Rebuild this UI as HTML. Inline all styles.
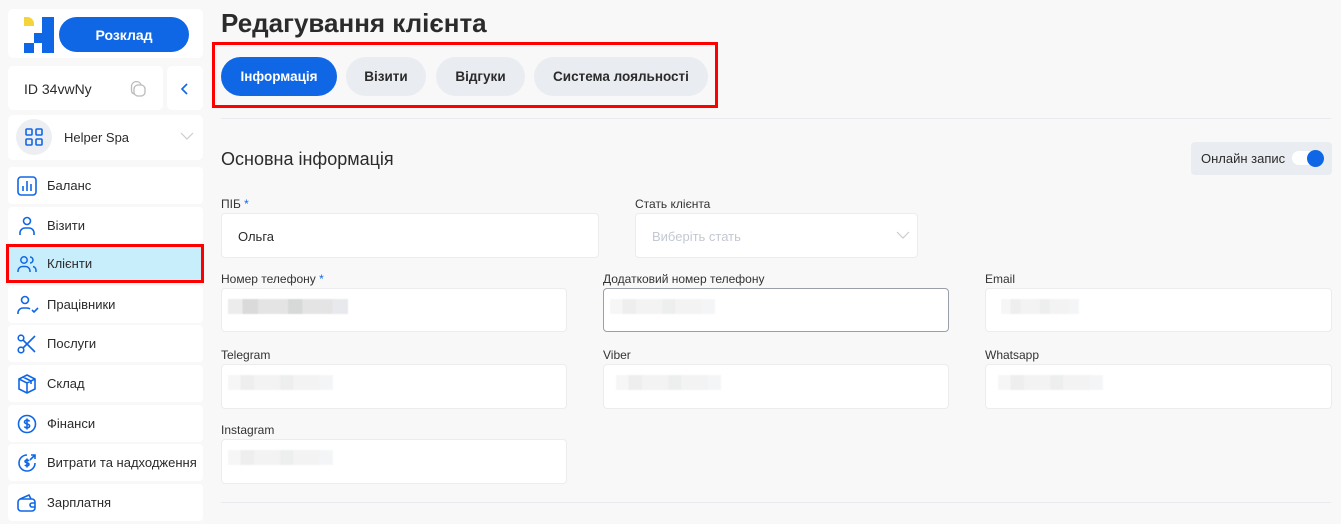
<!DOCTYPE html>
<html><head><meta charset="utf-8"><style>
*{box-sizing:border-box;margin:0;padding:0}
body{width:1341px;height:524px;overflow:hidden;background:#f8f8f9;font-family:"Liberation Sans",sans-serif;color:#2b2b2b;position:relative}
.a{position:absolute}
.card{position:absolute;background:#fff;border-radius:5px}
.mi{position:absolute;left:8px;width:195px;height:37px;background:#fff;border-radius:4px;font-size:13px;display:flex;align-items:center;padding-left:39px}
.mi svg{position:absolute;left:9px;top:9px}
.lbl{position:absolute;font-size:12px;color:#333}
.inp{position:absolute;background:#fff;border:1px solid #ececee;border-radius:4px;font-size:13px}
.blur{position:absolute;height:15px;top:10px;background:linear-gradient(90deg,#ebebeb 0 12%,#d6d6d6 12% 25%,#e2e2e2 25% 50%,#d3d5d5 50% 62%,#e2e2e2 62% 87%,#e6e7ea 87%);filter:blur(0.6px);opacity:.9}
.tab{position:absolute;top:57px;height:39px;border-radius:20px;background:#e9ecf1;font-size:13.5px;font-weight:bold;display:flex;align-items:center;justify-content:center;color:#2b2b2b}
</style></head><body>
<!-- sidebar -->
<div class="card" style="left:8px;top:9px;width:195px;height:49px"></div>
<div class="a" style="left:24px;top:17px;width:30px;height:36px">
<div class="a" style="left:0;top:0;width:10px;height:9px;background:#f5d33b;border-radius:0 7px 0 0"></div>
<div class="a" style="left:18px;top:0;width:12px;height:36px;background:#1067e6"></div>
<div class="a" style="left:10px;top:16px;width:8px;height:10px;background:#1067e6"></div>
<div class="a" style="left:0;top:26px;width:10px;height:10px;background:#1067e6"></div>
</div>
<div class="a" style="left:59px;top:17px;width:130px;height:35px;border-radius:18px;background:#1067e6;color:#fff;font-weight:bold;font-size:14px;display:flex;align-items:center;justify-content:center">Розклад</div>
<div class="card" style="left:8px;top:66px;width:155px;height:44px"></div>
<div class="a" style="left:24px;top:81px;font-size:14px">ID 34vwNy</div>
<svg class="a" style="left:129px;top:80px" width="18" height="18" viewBox="0 0 18 18" fill="none" stroke="#bbb" stroke-width="1.3"><rect x="5" y="5" width="11" height="11" rx="4"/><path d="M12 4.5A5 5 0 0 0 2.5 6v4a4 4 0 0 0 2.5 4"/></svg>
<div class="card" style="left:167px;top:66px;width:36px;height:44px"></div>
<svg class="a" style="left:180px;top:82px" width="10" height="14" viewBox="0 0 10 14"><path d="M7 2L2 7l5 5" fill="none" stroke="#1067e6" stroke-width="1.6"/></svg>
<div class="card" style="left:8px;top:115px;width:195px;height:45px"></div>
<div class="a" style="left:16px;top:119px;width:36px;height:36px;border-radius:50%;background:#eceef2"></div>
<svg class="a" style="left:25px;top:128px" width="18" height="18" viewBox="0 0 18 18" fill="none" stroke="#1067e6" stroke-width="1.6"><rect x="1" y="1" width="6" height="6" rx="1"/><rect x="11" y="1" width="6" height="6" rx="1"/><rect x="1" y="11" width="6" height="6" rx="1"/><rect x="11" y="11" width="6" height="6" rx="1"/></svg>
<div class="a" style="left:64px;top:130px;font-size:13px">Helper Spa</div>
<svg class="a" style="left:180px;top:132px" width="14" height="8" viewBox="0 0 14 8"><path d="M1 1l6 6 6-6" fill="none" stroke="#ccc" stroke-width="1.2"/></svg>

<div class="mi" style="top:167px">Баланс<svg width="20" height="20" viewBox="0 0 20 20" fill="none" stroke="#1067e6" stroke-width="1.6"><rect x="1" y="1" width="18" height="18" rx="3"/><path d="M6 15V10M10 15V5M14 15V8"/></svg></div>
<div class="mi" style="top:207px">Візити<svg width="20" height="20" viewBox="0 0 20 20" fill="none" stroke="#1067e6" stroke-width="1.6"><circle cx="10" cy="5" r="3.5"/><path d="M3 19v-2a5 5 0 0 1 5-5h4a5 5 0 0 1 5 5v2"/></svg></div>
<div class="mi" style="top:245px;background:#c9eefb">Клієнти<svg width="20" height="20" viewBox="0 0 20 20" fill="none" stroke="#1067e6" stroke-width="1.5"><circle cx="7" cy="6" r="3.2"/><path d="M1 18v-1a4.5 4.5 0 0 1 4.5-4.5h3A4.5 4.5 0 0 1 13 17v1M13 3a3 3 0 0 1 0 6M16 12.5a4 4 0 0 1 3 4V18"/></svg></div>
<div class="a" style="left:6px;top:244px;width:198px;height:39px;border:3px solid #f00"></div>
<div class="mi" style="top:286px">Працівники<svg width="22" height="20" viewBox="0 0 22 20" fill="none" stroke="#1067e6" stroke-width="1.6"><circle cx="8" cy="5" r="3.5"/><path d="M1 19v-1a5 5 0 0 1 5-5h4a5 5 0 0 1 3 1M15 15l2 2 4-4"/></svg></div>
<div class="mi" style="top:325px">Послуги<svg width="20" height="20" viewBox="0 0 20 20" fill="none" stroke="#1067e6" stroke-width="1.6"><circle cx="4" cy="4" r="2.8"/><circle cx="4" cy="16" r="2.8"/><path d="M6 6l12 12M6 14L18 2"/></svg></div>
<div class="mi" style="top:365px">Склад<svg width="20" height="20" viewBox="0 0 20 20" fill="none" stroke="#1067e6" stroke-width="1.6"><path d="M10 1l8 4v10l-8 4-8-4V5zM2 5l8 4 8-4M10 9v10M6 3l8 4v3"/></svg></div>
<div class="mi" style="top:405px">Фінанси<svg width="20" height="20" viewBox="0 0 20 20" fill="none" stroke="#1067e6" stroke-width="1.6"><circle cx="10" cy="10" r="8.5"/><path d="M12.5 7.5c-.5-1-1.5-1.3-2.5-1.3s-2.5.5-2.5 1.8 1.5 1.6 2.5 1.9 2.6.6 2.6 2-1.3 1.9-2.6 1.9-2.2-.5-2.6-1.3M10 4.5v11"/></svg></div>
<div class="mi" style="top:444px">Витрати та надходження<svg width="20" height="20" viewBox="0 0 20 20" fill="none" stroke="#1067e6" stroke-width="1.6"><path d="M18 10a8 8 0 1 1-8-8M14 2h4v4M18 2l-5 5"/><path d="M12 8c-.4-.7-1.2-1-2-1s-2 .4-2 1.4 1.2 1.2 2 1.4 2 .5 2 1.5-1 1.5-2 1.5-1.7-.4-2-1M10 5.5v9"/></svg></div>
<div class="mi" style="top:484px">Зарплатня<svg width="20" height="20" viewBox="0 0 20 20" fill="none" stroke="#1067e6" stroke-width="1.6"><rect x="1" y="6" width="17" height="12" rx="3"/><path d="M3 6l9-4 2 4M18 10h-3a2 2 0 0 0 0 4h3"/></svg></div>

<!-- main -->
<div class="a" style="left:221px;top:8px;font-size:26px;font-weight:bold;color:#2b2b2b">Редагування клієнта</div>
<div class="a" style="left:212px;top:42px;width:506px;height:66px;border:3px solid #f00"></div>
<div class="tab" style="left:221px;width:116px;background:#1067e6;color:#fff">Інформація</div>
<div class="tab" style="left:346px;width:80px">Візити</div>
<div class="tab" style="left:436px;width:89px">Відгуки</div>
<div class="tab" style="left:534px;width:174px">Система лояльності</div>
<div class="a" style="left:221px;top:118px;width:1110px;height:1px;background:#e8eaee"></div>
<div class="a" style="left:221px;top:149px;font-size:18px;color:#2b2b2b">Основна інформація</div>
<div class="a" style="left:1191px;top:142px;width:141px;height:33px;background:#e9ecf1;border-radius:4px"></div>
<div class="a" style="left:1201px;top:151px;font-size:13px">Онлайн запис</div>
<div class="a" style="left:1292px;top:151px;width:32px;height:14px;border-radius:7px;background:#fff"></div>
<div class="a" style="left:1307px;top:150px;width:17px;height:17px;border-radius:50%;background:#1067e6"></div>

<div class="lbl" style="left:221px;top:197px">ПІБ <span style="color:#1067e6">*</span></div>
<div class="inp" style="left:221px;top:213px;width:378px;height:45px"><span class="a" style="left:16px;top:15px">Ольга</span></div>
<div class="lbl" style="left:635px;top:197px">Стать клієнта</div>
<div class="inp" style="left:635px;top:213px;width:283px;height:45px;color:#c3c8d2"><span class="a" style="left:16px;top:15px">Виберіть стать</span><svg class="a" style="left:260px;top:17px" width="14" height="8" viewBox="0 0 14 8"><path d="M1 1l6 6 6-6" fill="none" stroke="#ccc" stroke-width="1.2"/></svg></div>

<div class="lbl" style="left:221px;top:272px">Номер телефону <span style="color:#1067e6">*</span></div>
<div class="inp" style="left:221px;top:288px;width:346px;height:44px"><div class="blur" style="left:6px;width:120px"></div></div>
<div class="lbl" style="left:603px;top:272px">Додатковий номер телефону</div>
<div class="inp" style="left:603px;top:288px;width:346px;height:44px;border-color:#9aa0aa"><div class="blur" style="left:6px;width:105px;opacity:.4"></div></div>
<div class="lbl" style="left:985px;top:272px">Email</div>
<div class="inp" style="left:985px;top:288px;width:347px;height:44px"><div class="blur" style="left:15px;width:78px;opacity:.4"></div></div>

<div class="lbl" style="left:221px;top:348px">Telegram</div>
<div class="inp" style="left:221px;top:364px;width:346px;height:45px"><div class="blur" style="left:6px;width:105px;opacity:.4"></div></div>
<div class="lbl" style="left:603px;top:348px">Viber</div>
<div class="inp" style="left:603px;top:364px;width:346px;height:45px"><div class="blur" style="left:12px;width:105px;opacity:.4"></div></div>
<div class="lbl" style="left:985px;top:348px">Whatsapp</div>
<div class="inp" style="left:985px;top:364px;width:347px;height:45px"><div class="blur" style="left:12px;width:105px;opacity:.4"></div></div>

<div class="lbl" style="left:221px;top:423px">Instagram</div>
<div class="inp" style="left:221px;top:439px;width:346px;height:45px"><div class="blur" style="left:6px;width:105px;opacity:.4"></div></div>
<div class="a" style="left:221px;top:502px;width:1110px;height:1px;background:#e8eaee"></div>
</body></html>
